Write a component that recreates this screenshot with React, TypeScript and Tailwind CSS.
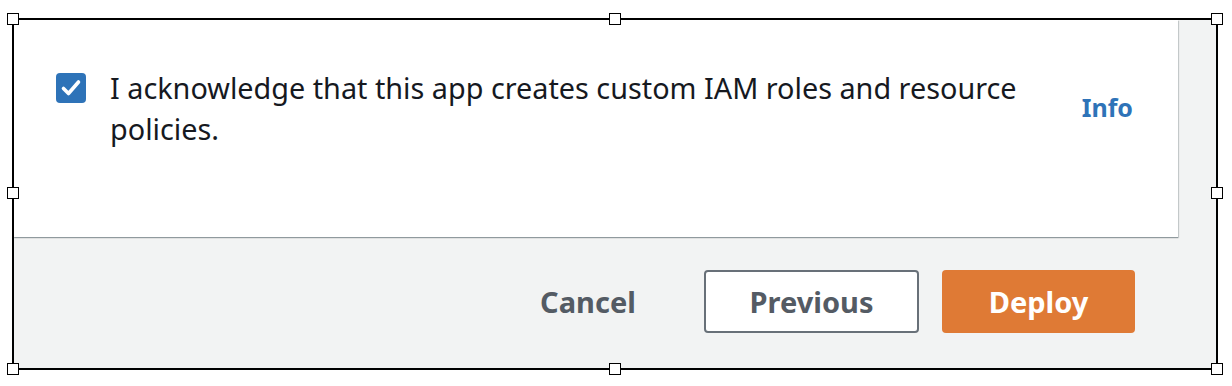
const Handle = ({ className }: { className: string }) => (
  <div className={`absolute h-3 w-3 border border-black bg-white ${className}`} />
)

const App = () => {
  return (
    <div className="relative h-[386px] w-[1232px] bg-white pl-3 pt-[18px] font-['Noto_Sans',sans-serif]">
      <div className="h-[352px] w-[1206px] overflow-hidden border-2 border-black bg-[#f2f3f3]">
        {/* card */}
        <div className="flex h-[217px] w-[1164px] items-center bg-white pb-[41px] pl-[42px] pr-[45px] shadow-[0_1px_1px_0_rgba(0,28,36,0.3),1px_1px_1px_0_rgba(0,28,36,0.15)]">
          <div className="flex items-start gap-6">
            <div className="mt-[6px] flex h-[30px] w-[30px] shrink-0 items-center justify-center rounded-[4px] bg-[#2e73b8]">
              <svg width="24" height="24" viewBox="0 0 24 24" fill="none">
                <path d="M4.5 12.5l5 5L19.5 6" stroke="white" strokeWidth="3.6" strokeLinecap="round" strokeLinejoin="round" />
              </svg>
            </div>
            <p className="w-[960px] text-[28.8px] leading-[41px] text-[#16191f]">
              I acknowledge that this app creates custom IAM roles and resource policies.
            </p>
          </div>
          <a className="ml-auto text-[25px] font-bold text-[#2e73b8]">Info</a>
        </div>

        {/* footer */}
        <div className="flex justify-end gap-[23px] pr-[81px] pt-[33px]">
          <button className="flex h-[63px] w-[186px] items-center justify-center text-[29px] font-bold text-[#545b64]">
            Cancel
          </button>
          <button className="flex h-[63px] w-[215px] items-center justify-center rounded-[4px] border-2 border-[#687078] bg-white text-[29px] font-bold text-[#545b64]">
            Previous
          </button>
          <button className="flex h-[63px] w-[193px] items-center justify-center rounded-[4px] bg-[#df7a35] text-[29px] font-bold text-white">
            Deploy
          </button>
        </div>
      </div>

      {/* selection handles over the frame */}
      <Handle className="left-[7px] top-[13px]" />
      <Handle className="left-[609px] top-[13px]" />
      <Handle className="left-[1211px] top-[13px]" />
      <Handle className="left-[7px] top-[187px]" />
      <Handle className="left-[1211px] top-[187px]" />
      <Handle className="left-[7px] top-[363px]" />
      <Handle className="left-[609px] top-[363px]" />
      <Handle className="left-[1211px] top-[363px]" />
    </div>
  )
}

export default App
